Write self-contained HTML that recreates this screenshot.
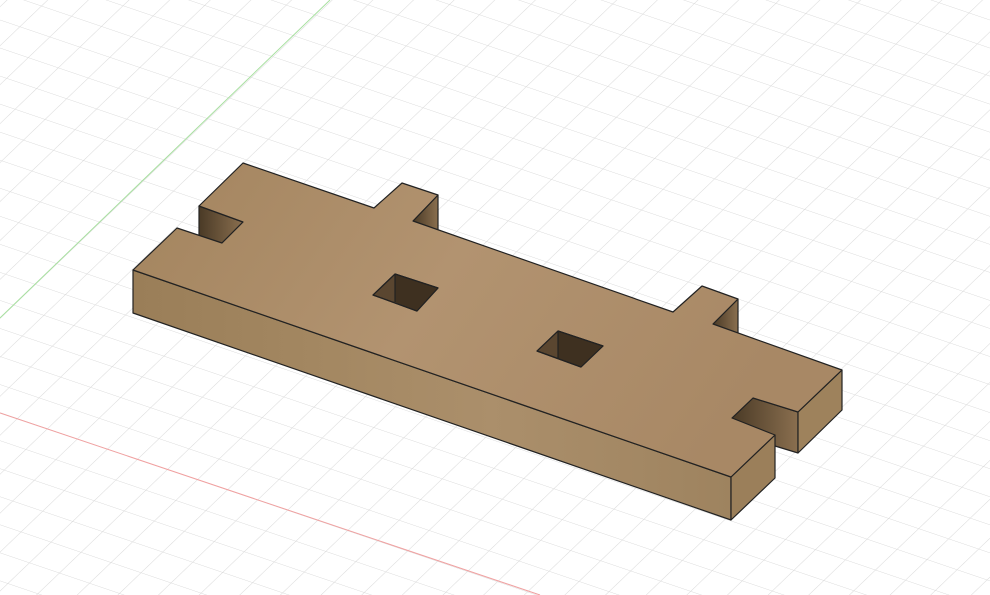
<!DOCTYPE html>
<html><head><meta charset="utf-8"><style>html,body{margin:0;padding:0;background:#fff;}svg{display:block}</style></head>
<body>
<svg width="990" height="595" viewBox="0 0 990 595" xmlns="http://www.w3.org/2000/svg">
<defs>
<pattern id="g" width="30" height="30" patternUnits="userSpaceOnUse" patternTransform="matrix(1 0.34 0.72 -0.69 -73 388)">
<path d="M0 0H30M0 0V30" stroke="#d9d9d9" stroke-width="1.1" fill="none"/>
</pattern>
<linearGradient id="top" x1="0" y1="0" x2="1" y2="0.3">
<stop offset="0" stop-color="#a3845e"/><stop offset="0.5" stop-color="#b29370"/><stop offset="1" stop-color="#a88865"/>
</linearGradient>
<linearGradient id="front" x1="0" y1="0" x2="1" y2="0">
<stop offset="0" stop-color="#9a7e58"/><stop offset="0.3" stop-color="#a38761"/><stop offset="0.6" stop-color="#ab8f6b"/><stop offset="1" stop-color="#9e835f"/>
</linearGradient>
<linearGradient id="dark" x1="0" y1="0" x2="1" y2="0">
<stop offset="0" stop-color="#4a3a26"/><stop offset="1" stop-color="#8a6f4f"/>
</linearGradient>
</defs>
<rect width="990" height="595" fill="url(#g)"/>
<line x1="330" y1="0" x2="0" y2="318" stroke="#a8e0a0" stroke-width="1"/>
<line x1="0" y1="413" x2="540" y2="595" stroke="#f0a0a0" stroke-width="1"/>
<g stroke="#222" stroke-width="1.2" stroke-linejoin="round">
<polygon points="199,206 243,222 222,243 199,250" fill="url(#dark)"/>
<polygon points="413,221 438,195 438,231" fill="url(#dark)"/>
<polygon points="713,324 738,299 738,334" fill="url(#dark)"/>
<polygon points="732,418 753,398 798,412 798,453 775,446" fill="url(#dark)"/>
<polygon points="133,270 731,477 731,520 133,313" fill="url(#front)"/>
<polygon points="731,477 775,435 775,478 731,520" fill="#9b7f5a"/>
<polygon points="798,412 842,370 842,410 798,453" fill="#9e825c"/>
<polygon points="243,163 374,208 402,183 438,195 413,221 673,312 702,286 738,299 713,324 842,370 798,412 753,398 732,418 775,435 731,477 133,270 177,228 222,243 243,222 199,206" fill="url(#top)"/>
<polygon points="373,295 395,274 438,288 417,311" fill="#5a4630"/>
<polygon points="395,274 438,288 417,311 395,302" fill="#3e3020" stroke="none"/>
<polygon points="537,351 558,331 603,346 581,367" fill="#5a4630"/>
<polygon points="558,331 603,346 581,367 558,358" fill="#3e3020" stroke="none"/>
<polyline points="395,274 395,302" fill="none"/>
<polyline points="558,331 558,358" fill="none"/>
<polygon points="373,295 395,274 438,288 417,311" fill="none"/>
<polygon points="537,351 558,331 603,346 581,367" fill="none"/>
</g>
</svg>
</body></html>
